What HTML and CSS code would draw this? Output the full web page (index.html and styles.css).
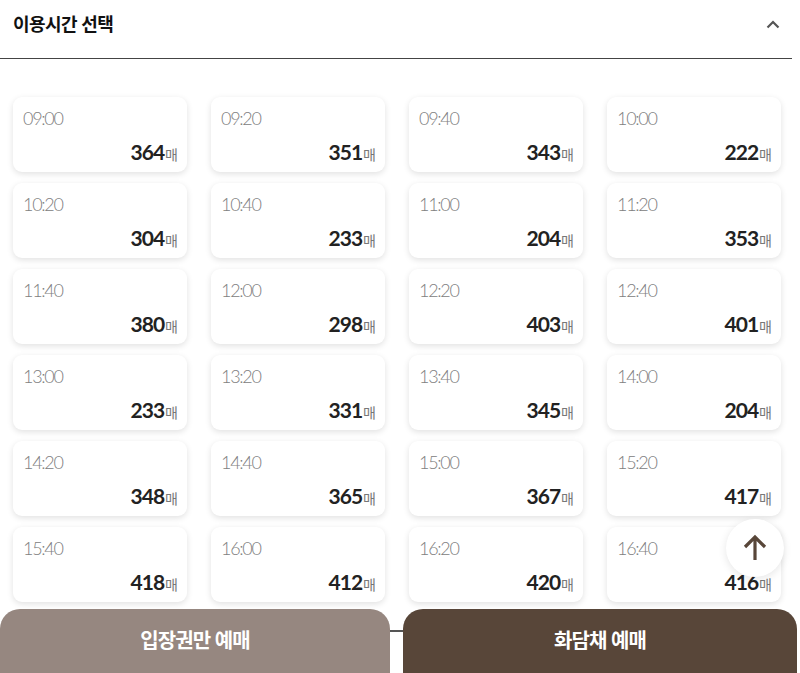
FILE: index.html
```html
<!DOCTYPE html>
<html lang="ko">
<head>
<meta charset="utf-8">
<link rel="stylesheet" href="styles.css">
</head>
<body>
<div class="page">
  <header class="head">
    <h2 class="title">이용시간 선택</h2>
    <svg class="chev" width="14" height="9" viewBox="0 0 14 9"><path d="M1.5 7.5 L7 2 L12.5 7.5" fill="none" stroke="#555" stroke-width="2.2"/></svg>
  </header>
  <div class="grid">
    <div class="card"><span class="time">09:00</span><span class="cnt"><b>364</b><i>매</i></span></div>
    <div class="card"><span class="time">09:20</span><span class="cnt"><b>351</b><i>매</i></span></div>
    <div class="card"><span class="time">09:40</span><span class="cnt"><b>343</b><i>매</i></span></div>
    <div class="card"><span class="time">10:00</span><span class="cnt"><b>222</b><i>매</i></span></div>
    <div class="card"><span class="time">10:20</span><span class="cnt"><b>304</b><i>매</i></span></div>
    <div class="card"><span class="time">10:40</span><span class="cnt"><b>233</b><i>매</i></span></div>
    <div class="card"><span class="time">11:00</span><span class="cnt"><b>204</b><i>매</i></span></div>
    <div class="card"><span class="time">11:20</span><span class="cnt"><b>353</b><i>매</i></span></div>
    <div class="card"><span class="time">11:40</span><span class="cnt"><b>380</b><i>매</i></span></div>
    <div class="card"><span class="time">12:00</span><span class="cnt"><b>298</b><i>매</i></span></div>
    <div class="card"><span class="time">12:20</span><span class="cnt"><b>403</b><i>매</i></span></div>
    <div class="card"><span class="time">12:40</span><span class="cnt"><b>401</b><i>매</i></span></div>
    <div class="card"><span class="time">13:00</span><span class="cnt"><b>233</b><i>매</i></span></div>
    <div class="card"><span class="time">13:20</span><span class="cnt"><b>331</b><i>매</i></span></div>
    <div class="card"><span class="time">13:40</span><span class="cnt"><b>345</b><i>매</i></span></div>
    <div class="card"><span class="time">14:00</span><span class="cnt"><b>204</b><i>매</i></span></div>
    <div class="card"><span class="time">14:20</span><span class="cnt"><b>348</b><i>매</i></span></div>
    <div class="card"><span class="time">14:40</span><span class="cnt"><b>365</b><i>매</i></span></div>
    <div class="card"><span class="time">15:00</span><span class="cnt"><b>367</b><i>매</i></span></div>
    <div class="card"><span class="time">15:20</span><span class="cnt"><b>417</b><i>매</i></span></div>
    <div class="card"><span class="time">15:40</span><span class="cnt"><b>418</b><i>매</i></span></div>
    <div class="card"><span class="time">16:00</span><span class="cnt"><b>412</b><i>매</i></span></div>
    <div class="card"><span class="time">16:20</span><span class="cnt"><b>420</b><i>매</i></span></div>
    <div class="card"><span class="time">16:40</span><span class="cnt"><b>416</b><i>매</i></span></div>
  </div>
  <div class="bar">
    <button class="btn btn-light">입장권만 예매</button>
    <span class="joint"></span>
    <button class="btn btn-dark">화담채 예매</button>
  </div>
  <button class="top" aria-label="맨 위로">
    <svg width="26" height="28" viewBox="0 0 26 28"><path d="M13 26 V3 M3 13 L13 3 L23 13" fill="none" stroke="#584639" stroke-width="3.2"/></svg>
  </button>
</div>
</body>
</html>
```

FILE: styles.css
```css
* { box-sizing: border-box; }
html, body { margin: 0; padding: 0; background: #fff; }
body { font-family: "Noto Sans CJK KR", "Noto Sans", sans-serif; overflow: hidden; }
.page { position: relative; width: 800px; height: 673px; overflow: hidden; }
.head {
  width: 792px;
  height: 59px;
  display: flex;
  align-items: flex-start;
  justify-content: space-between;
  padding: 8px 13px 0 13px;
  border-bottom: 1.5px solid #444;
}
.title {
  margin: 0;
  font-size: 18px;
  font-weight: 700;
  letter-spacing: -0.6px;
  color: #111;
  line-height: 30px;
}
.chev { margin-top: 12px; margin-right: -1px; }
.grid {
  margin: 38px 0 0 13px;
  width: 768px;
  display: grid;
  grid-template-columns: repeat(4, 174px);
  column-gap: 24px;
  row-gap: 11px;
}
.card {
  height: 75px;
  background: #fff;
  border-radius: 9px;
  box-shadow: 0 2px 6px rgba(0,0,0,0.12);
  display: flex;
  flex-direction: column;
  justify-content: space-between;
  padding: 9px 9px 6px 10px;
}
.time {
  font-family: Lato, "Noto Sans", sans-serif;
  font-weight: 300;
  font-size: 18px;
  letter-spacing: -1.3px;
  color: #808080;
  line-height: 24px;
}
.cnt { align-self: flex-end; display: flex; align-items: baseline; line-height: 24px; }
.cnt b {
  font-family: Lato, "Noto Sans", sans-serif;
  font-weight: 700;
  font-size: 21px;
  letter-spacing: -1px;
  color: #222;
}
.cnt i {
  font-style: normal;
  font-size: 14px;
  color: #777;
  margin-left: 1px;
}
.bar {
  margin-top: 7px;
  display: flex;
  align-items: flex-start;
}
.btn {
  border: none;
  height: 70px;
  border-radius: 20px 20px 0 0;
  color: #fff;
  font-family: "Noto Sans CJK KR", sans-serif;
  font-weight: 700;
  font-size: 20px;
  letter-spacing: -0.9px;
  padding: 0 0 8px 0;
  line-height: 62px;
}
.btn-light { width: 390px; background: #968780; }
.btn-dark { width: 394px; background: #584639; }
.joint { width: 13px; height: 1.5px; background: #555; margin-top: 21px; }
.top {
  position: absolute;
  left: 726px;
  top: 519px;
  width: 58px;
  height: 58px;
  border-radius: 50%;
  border: none;
  background: #fff;
  box-shadow: 0 2px 8px rgba(0,0,0,0.1);
  display: flex;
  align-items: center;
  justify-content: center;
  padding: 0;
}
```
